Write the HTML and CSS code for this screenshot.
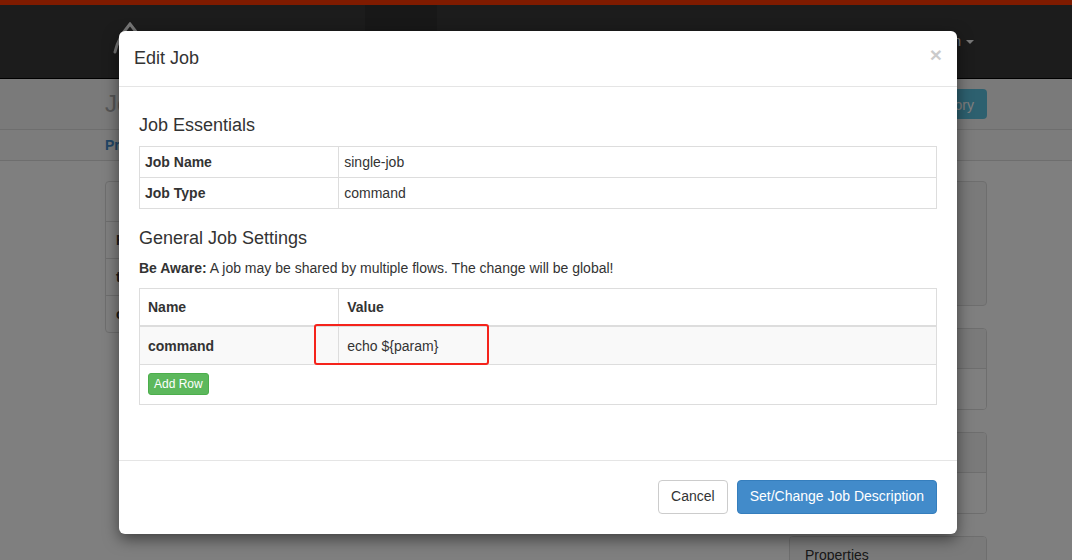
FILE: index.html
```html
<!DOCTYPE html>
<html>
<head>
<meta charset="utf-8">
<title>Edit Job</title>
<link rel="stylesheet" href="styles.css">
</head>
<body>
<div class="page">
  <header class="topnav">
    <div class="nav-inner">
      <a class="brand">
        <svg class="logo" width="40" height="40" viewBox="0 0 40 40"><path d="M5 32 Q8 18 20 4 Q32 18 35 32" fill="none" stroke="#eeeeee" stroke-width="3" stroke-linecap="round"/></svg>
      </a>
      <div class="nav-item active"></div>
      <div class="nav-user">admin <span class="caret"></span></div>
    </div>
  </header>
  <div class="subhead">
    <div class="container subhead-inner">
      <h1 class="page-title">Job Edit</h1>
      <button class="btn btn-info">Job History</button>
    </div>
  </div>
  <div class="tabs">
    <div class="container">
      <a class="tab-link">Project</a>
    </div>
  </div>
  <div class="container content">
    <div class="main-col">
      <div class="panel">
        <div class="panel-row head"></div>
        <div class="panel-row">Flow</div>
        <div class="panel-row">type</div>
        <div class="panel-row last">command</div>
      </div>
    </div>
    <div class="side-col">
      <div class="side-panel tall"></div>
      <div class="side-panel">
        <div class="side-head"></div>
        <div class="side-body"></div>
      </div>
      <div class="side-panel">
        <div class="side-head"></div>
        <div class="side-body"></div>
      </div>
      <div class="side-panel">
        <div class="side-head">Properties</div>
      </div>
    </div>
  </div>
</div>

<div class="backdrop"></div>

<div class="modal">
  <div class="modal-header">
    <h4 class="modal-title">Edit Job</h4>
    <span class="close">&times;</span>
  </div>
  <div class="modal-body">
    <h4 class="section-title">Job Essentials</h4>
    <table class="tbl tbl-condensed">
      <tr><th class="col-name">Job Name</th><td>single-job</td></tr>
      <tr><th class="col-name">Job Type</th><td>command</td></tr>
    </table>
    <h4 class="section-title">General Job Settings</h4>
    <p class="note"><strong>Be Aware:</strong> A job may be shared by multiple flows. The change will be global!</p>
    <table class="tbl tbl-regular">
      <thead>
        <tr><th class="col-name">Name</th><th>Value</th></tr>
      </thead>
      <tbody>
        <tr class="striped"><th class="col-name">command</th><td>echo ${param}</td></tr>
        <tr class="add-row"><td colspan="2"><button class="btn-xs btn-success">Add Row</button></td></tr>
      </tbody>
    </table>
  </div>
  <div class="modal-footer">
    <button class="btn btn-default">Cancel</button>
    <button class="btn btn-primary">Set/Change Job Description</button>
  </div>
  <div class="highlight"></div>
</div>
</body>
</html>
```
FILE: styles.css
```css
* { box-sizing: border-box; }
html, body { margin: 0; padding: 0; }
body {
  font-family: "Liberation Sans", Arial, sans-serif;
  font-size: 14px;
  line-height: 1.428571;
  color: #333;
  background: #fff;
  width: 1072px;
  height: 560px;
  overflow: hidden;
  position: relative;
}

/* ---------- background page ---------- */
.topnav {
  height: 79px;
  background: #383838;
  border-top: 5px solid #ff3601;
  border-bottom: 1px solid #000;
}
.nav-inner { display: flex; height: 73px; padding-left: 110px; }
.brand { width: 255px; padding-top: 15px; }
.logo { display: block; }
.nav-item { width: 72px; }
.nav-item.active { background: #303030; }
.nav-user {
  margin-left: auto;
  padding-right: 98px;
  display: flex;
  align-items: center;
  gap: 5px;
  color: #eee;
  font-size: 14px;
}
.caret {
  width: 0; height: 0;
  border-left: 4px solid transparent;
  border-right: 4px solid transparent;
  border-top: 4px solid #eee;
}

.container { margin-left: 105px; width: 882px; }

.subhead { height: 51px; background: #f4f4f4; border-bottom: 1px solid #dcdcdc; }
.subhead-inner { display: flex; justify-content: space-between; align-items: center; height: 50px; }
.page-title { margin: 0; font-size: 24px; font-weight: normal; color: #aaa; }
.btn-info {
  height: 30px;
  padding: 4px 12px;
  border: 1px solid #46b8da;
  border-radius: 4px;
  background: #5bc0de;
  color: #fff;
  font-family: inherit;
  font-size: 14px;
}

.tabs { height: 31px; background: #f8f8f8; border-bottom: 1px solid #dcdcdc; }
.tab-link { display: block; line-height: 30px; color: #428bca; font-weight: bold; }

.content { display: flex; gap: 20px; padding-top: 20px; }
.main-col { flex: 1; }
.side-col { width: 198px; display: flex; flex-direction: column; gap: 22px; }

.panel { border: 1px solid #ddd; border-radius: 4px; }
.panel-row { height: 37px; line-height: 36px; padding: 0 10px; border-bottom: 1px solid #ddd; font-weight: bold; }
.panel-row.head { height: 40px; }
.panel-row.last { border-bottom: none; height: 36px; }

.side-panel { border: 1px solid #ddd; border-radius: 4px; overflow: hidden; }
.side-panel.tall { height: 125px; background: #f5f5f5; }
.side-head { height: 40px; background: #f5f5f5; border-bottom: 1px solid #ddd; padding: 9px 15px; }
.side-body { height: 40px; background: #fff; }

.backdrop { position: absolute; inset: 0; background: rgba(0, 0, 0, 0.5); }

/* ---------- modal ---------- */
.modal {
  position: absolute;
  left: 119px;
  top: 31px;
  width: 838px;
  background: #fff;
  border-radius: 6px;
  box-shadow: 0 5px 15px rgba(0, 0, 0, 0.5);
}
.modal-header {
  display: flex;
  justify-content: space-between;
  align-items: flex-start;
  padding: 15px;
  border-bottom: 1px solid #e5e5e5;
}
.modal-title { margin: 0; font-size: 18px; font-weight: normal; line-height: 25px; }
.close {
  font-size: 21px;
  font-weight: bold;
  line-height: 1;
  color: #000;
  opacity: 0.2;
  margin-top: -2px;
}
.modal-body { padding: 19px 20px 20px; }
.section-title { margin: 10px 0; font-size: 18px; font-weight: normal; line-height: 1.1; }
.note { margin: 0 0 9px; }

.tbl { width: 100%; border-collapse: collapse; margin-bottom: 20px; }
.tbl th, .tbl td { border: 1px solid #ddd; text-align: left; vertical-align: top; line-height: 20px; }
.tbl th { font-weight: bold; }
.tbl .col-name { width: 25%; }
.tbl-condensed th, .tbl-condensed td { padding: 5px; }
.tbl-regular th, .tbl-regular td { padding: 8px; }
.tbl-regular thead th { border-bottom: 2px solid #ddd; vertical-align: bottom; }
.tbl-regular tr.striped th, .tbl-regular tr.striped td { background: #f9f9f9; padding-top: 9px; }
.tbl-regular tr.add-row td { padding-bottom: 9px; }

.btn-xs {
  display: block;
  padding: 1px 5px;
  font-family: inherit;
  font-size: 12px;
  line-height: 1.5;
  border-radius: 3px;
  border: 1px solid #4cae4c;
  background: #5cb85c;
  color: #fff;
}

.modal-footer {
  margin-top: 15px;
  padding: 19px 20px 20px;
  border-top: 1px solid #e5e5e5;
  display: flex;
  justify-content: flex-end;
  gap: 9px;
}
.btn {
  padding: 6px 12px;
  font-family: inherit;
  font-size: 14px;
  line-height: 1.428571;
  border-radius: 4px;
  border: 1px solid transparent;
}
.btn-default { background: #fff; border-color: #ccc; color: #333; }
.btn-primary { background: #428bca; border-color: #357ebd; color: #fff; }

.highlight {
  position: absolute;
  left: 195px;
  top: 293px;
  width: 175px;
  height: 41px;
  border: 2px solid #f5231b;
  border-radius: 3px;
}
```
